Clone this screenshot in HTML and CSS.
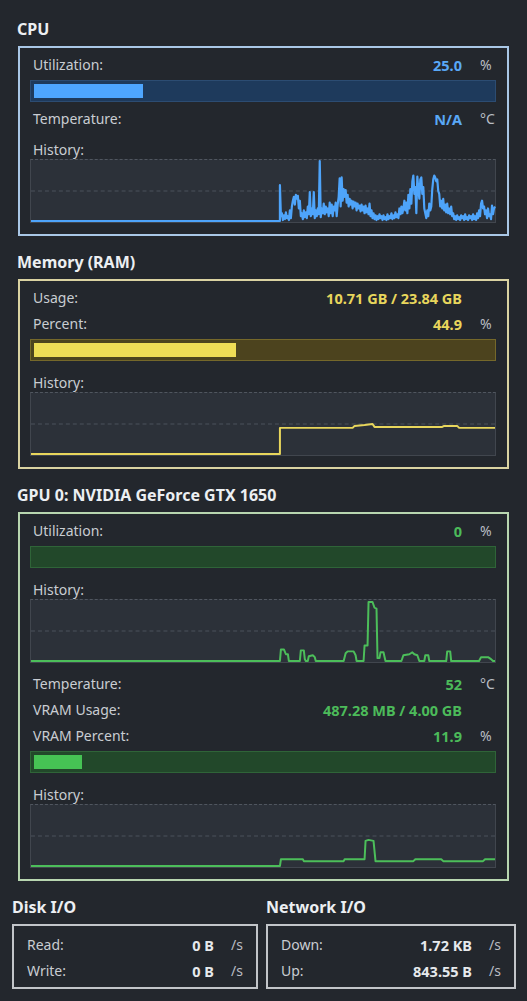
FILE: index.html
```html
<!DOCTYPE html>
<html>
<head>
<meta charset="utf-8">
<link rel="stylesheet" href="styles.css">
</head>
<body>
<div class="page">
  <section class="section cpu">
    <h2 class="title">CPU</h2>
    <div class="box">
      <div class="row"><span class="label">Utilization:</span><span class="value">25.0</span><span class="unit">%</span></div>
      <div class="bar"><div class="fill" style="width:23.8%"></div></div>
      <div class="row"><span class="label">Temperature:</span><span class="value">N/A</span><span class="unit">°C</span></div>
      <div class="hist">History:</div>
      <div class="chart">
        <svg viewBox="0 0 466 64" preserveAspectRatio="none">
          <line class="mid" x1="0" y1="32" x2="466" y2="32"/>
          <polyline class="data" points="0,63 250,63 250,26 251,58 252,55 253,62 254,57 255,61 256,54 257,60 258,58 259,62 260,52 261,60 262,48 263,42 264,38 265,46 266,36 267,40 268,37 269,50 270,42 271,58 272,55 273,61 274,52 275,59 276,54 277,60 278,48 279,56 280,33 281,58 282,50 283,56 284,33 285,60 286,52 287,58 288,50 289,56 290,1 291,59 292,50 293,55 294,45 295,56 296,48 297,54 298,50 299,58 300,44 301,55 302,46 303,58 304,48 305,52 306,44 307,58 308,46 309,38 310,19 311,48 312,18 313,42 314,30 315,38 316,31 317,44 318,36 319,48 320,40 321,46 322,42 323,50 324,43 325,48 326,44 327,52 328,45 329,50 330,47 331,53 332,46 333,52 334,48 335,55 336,47 337,54 338,50 339,56 340,45 341,58 342,52 343,60 344,55 345,61 346,57 347,62 348,58 349,61 350,56 351,60 352,58 353,62 354,57 355,61 356,59 357,62 358,56 359,61 360,58 361,60 362,55 363,61 364,57 365,60 366,54 367,59 368,56 369,60 370,50 371,56 372,48 373,55 374,50 375,42 376,52 377,44 378,55 379,36 380,50 381,30 382,45 383,22 384,16 385,35 386,28 387,55 388,17 389,30 390,40 391,20 392,18 393,35 394,28 395,50 396,55 397,60 398,52 399,58 400,45 401,52 402,48 403,30 404,20 405,16 406,18 407,22 408,20 409,32 410,35 411,48 412,42 413,50 414,40 415,52 416,46 417,54 418,45 419,55 420,50 421,56 422,48 423,58 424,55 425,61 426,58 427,62 428,57 429,61 430,59 431,62 432,57 433,60 434,58 435,62 436,56 437,61 438,59 439,62 440,57 441,60 442,58 443,62 444,56 445,61 446,58 447,62 448,55 449,60 450,52 451,58 452,45 453,42 454,50 455,48 456,56 457,52 458,60 459,50 460,58 461,56 462,61 463,47 464,56 465,50 466,48"/>
        </svg>
      </div>
    </div>
  </section>

  <section class="section mem">
    <h2 class="title">Memory (RAM)</h2>
    <div class="box">
      <div class="row"><span class="label">Usage:</span><span class="value">10.71 GB / 23.84 GB</span><span class="unit"></span></div>
      <div class="row"><span class="label">Percent:</span><span class="value">44.9</span><span class="unit">%</span></div>
      <div class="bar"><div class="fill" style="width:44.1%"></div></div>
      <div class="hist">History:</div>
      <div class="chart">
        <svg viewBox="0 0 466 64" preserveAspectRatio="none">
          <line class="mid" x1="0" y1="32" x2="466" y2="32"/>
          <polyline class="data" points="0,63 250,63 250,36 323,36 325,34 335,33 343,32 345,35 413,35 415,34 428,34 430,36 466,36"/>
        </svg>
      </div>
    </div>
  </section>

  <section class="section gpu">
    <h2 class="title">GPU 0: NVIDIA GeForce GTX 1650</h2>
    <div class="box">
      <div class="row"><span class="label">Utilization:</span><span class="value">0</span><span class="unit">%</span></div>
      <div class="bar"><div class="fill" style="width:0%"></div></div>
      <div class="hist">History:</div>
      <div class="chart">
        <svg viewBox="0 0 466 64" preserveAspectRatio="none">
          <line class="mid" x1="0" y1="32" x2="466" y2="32"/>
          <polyline class="data" points="0,63 250,63 251,51 254,51 256,56 258,56 259,63 270,63 271,52 274,52 275,61 276,63 278,63 279,58 283,57 285,59 286,63 314,63 316,55 318,53 324,53 326,57 327,63 334,63 335,47 338,47 339,2 343,2 345,8 347,9 348,60 350,60 351,54 354,54 356,63 372,63 374,57 380,56 383,54 385,56 388,57 390,63 395,63 396,57 399,57 400,63 417,63 418,53 421,53 422,63 450,63 452,59 459,59 462,61 464,63 466,63"/>
        </svg>
      </div>
      <div class="row"><span class="label">Temperature:</span><span class="value">52</span><span class="unit">°C</span></div>
      <div class="row"><span class="label">VRAM Usage:</span><span class="value">487.28 MB / 4.00 GB</span><span class="unit"></span></div>
      <div class="row"><span class="label">VRAM Percent:</span><span class="value">11.9</span><span class="unit">%</span></div>
      <div class="bar"><div class="fill" style="width:10.5%"></div></div>
      <div class="hist">History:</div>
      <div class="chart">
        <svg viewBox="0 0 466 64" preserveAspectRatio="none">
          <line class="mid" x1="0" y1="32" x2="466" y2="32"/>
          <polyline class="data" points="0,63 250,63 251,56 273,56 274,58 314,58 315,56 335,56 336,37 339,36 344,37 346,58 384,58 386,56 412,56 414,58 454,58 456,56 466,56"/>
        </svg>
      </div>
    </div>
  </section>

  <div class="io">
    <section class="io-section">
      <h2 class="title">Disk I/O</h2>
      <div class="io-box">
        <div class="io-row"><span class="label">Read:</span><span class="value">0 B</span><span class="unit">/s</span></div>
        <div class="io-row"><span class="label">Write:</span><span class="value">0 B</span><span class="unit">/s</span></div>
      </div>
    </section>
    <section class="io-section">
      <h2 class="title">Network I/O</h2>
      <div class="io-box">
        <div class="io-row"><span class="label">Down:</span><span class="value">1.72 KB</span><span class="unit">/s</span></div>
        <div class="io-row"><span class="label">Up:</span><span class="value">843.55 B</span><span class="unit">/s</span></div>
      </div>
    </section>
  </div>
</div>
</body>
</html>
```

FILE: styles.css
```css
* { box-sizing: border-box; margin: 0; padding: 0; }

html, body {
  background: #23272d;
}

body {
  font-family: "Noto Sans", "Open Sans", sans-serif;
  font-size: 14px;
  color: #c9cdd2;
  width: 527px;
  height: 1001px;
  overflow: hidden;
}

.page {
  padding-top: 19px;
}

.section {
  margin: 0 18px 16px 18px;
}

.title {
  font-size: 16px;
  font-weight: 700;
  color: #eceff2;
  line-height: 20px;
  height: 20px;
  margin-bottom: 7px;
  margin-left: -1px;
  white-space: nowrap;
}

.box {
  border: 2px solid #a9c7e6;
  padding: 8px 11px 11px 10px;
  display: flex;
  flex-direction: column;
}

.row {
  display: grid;
  grid-template-columns: 1fr auto 34px;
  height: 18px;
  line-height: 18px;
}

.row + .row { margin-top: 8px; }
.bar + .row { margin-top: 8px; }
.chart + .row { margin-top: 12px; }

.label { padding-left: 3px; }

.value {
  font-size: 14.5px;
  font-weight: 700;
  text-align: right;
  white-space: nowrap;
}

.unit {
  padding-left: 18px;
  color: #b9bdc3;
}

.bar {
  height: 22px;
  margin-top: 6px;
  border: 1px solid #2c4c72;
  background: #1e3a5c;
  padding: 3px;
}

.fill {
  height: 100%;
  background: #4ea6ff;
}

.hist {
  margin-top: 13px;
  height: 18px;
  line-height: 18px;
  padding-left: 3px;
}

.chart {
  height: 64px;
  background: #2c3139;
  border: 1px solid #41464e;
  border-top: 1px dashed #50565f;
}

.chart svg {
  display: block;
  width: 100%;
  height: 100%;
  overflow: visible;
}

.chart .mid {
  stroke: #4d535c;
  stroke-width: 1;
  stroke-dasharray: 4 3;
}

.chart .data {
  fill: none;
  stroke-width: 2;
  stroke-linejoin: round;
}

.cpu .data { stroke-width: 2.2; }

/* CPU */
.cpu .box { border-color: #a9c7e6; }
.cpu .value { color: #59a8f6; }
.cpu .data { stroke: #4ea4fa; }

/* Memory */
.mem .box { border-color: #dad3a2; }
.mem .value { color: #e8d65c; }
.mem .bar { background: #4c431e; border-color: #75682a; }
.mem .fill { background: #eedc56; }
.mem .data { stroke: #e8d65c; }

/* GPU */
.gpu .box { border-color: #b8d6b0; }
.gpu .value { color: #4cbb5a; }
.gpu .bar { background: #22482a; border-color: #2f6438; }
.gpu .fill { background: #46c354; }
.gpu .data { stroke: #4cbe5a; }

/* I/O */
.io {
  display: grid;
  grid-template-columns: 246px 1fr;
  column-gap: 8px;
  padding: 0 11px 0 12px;
}

.io .title { margin-left: 0; }

.io-box {
  border: 2px solid #c2c5c9;
  padding: 10px 14px 7px 13px;
}

.io-row {
  display: grid;
  grid-template-columns: 1fr auto 28px;
  height: 18px;
  line-height: 18px;
}

.io-row + .io-row { margin-top: 8px; }

.io-row .label { padding-left: 0; }
.io-row .value { color: #e6e9ec; }
.io-row .unit { padding-left: 17px; }
```
